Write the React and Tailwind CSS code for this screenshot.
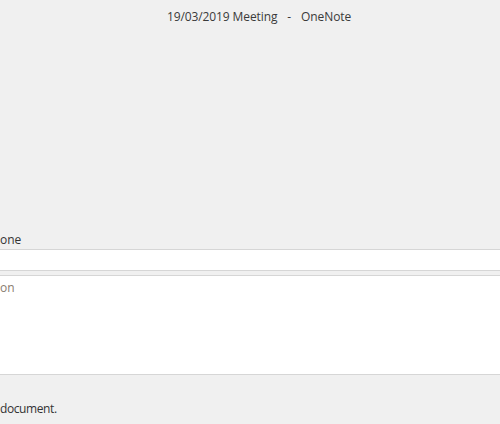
export default function App() {
  return (
    <div
      className="w-[500px] h-[424px] overflow-hidden bg-[#f0f0f0] flex flex-col text-[12px] text-[#333]"
      style={{ fontFamily: '"Open Sans", "Noto Sans", sans-serif' }}
    >
      <div className="h-[34px] shrink-0 flex items-center justify-center pl-[18px] text-[#3a3a3a] tracking-[-0.1px]">
        <span>19/03/2019 Meeting</span>
        <span className="mx-[10px]">-</span>
        <span>OneNote</span>
      </div>

      <div className="mt-[198px] h-[16px] leading-[16px] shrink-0">one</div>

      <div className="mt-[1px] h-[22px] shrink-0 bg-white border-y border-[#d6d6d6]" />

      <div className="mt-[4px] h-[100px] shrink-0 bg-white border-y border-[#d6d6d6] pt-[3px] leading-[17px] text-[#8a7c70]">
        on
      </div>

      <div className="mt-[26px] h-[16px] leading-[16px] shrink-0 tracking-[-0.4px] text-[#333]">document.</div>
    </div>
  )
}
